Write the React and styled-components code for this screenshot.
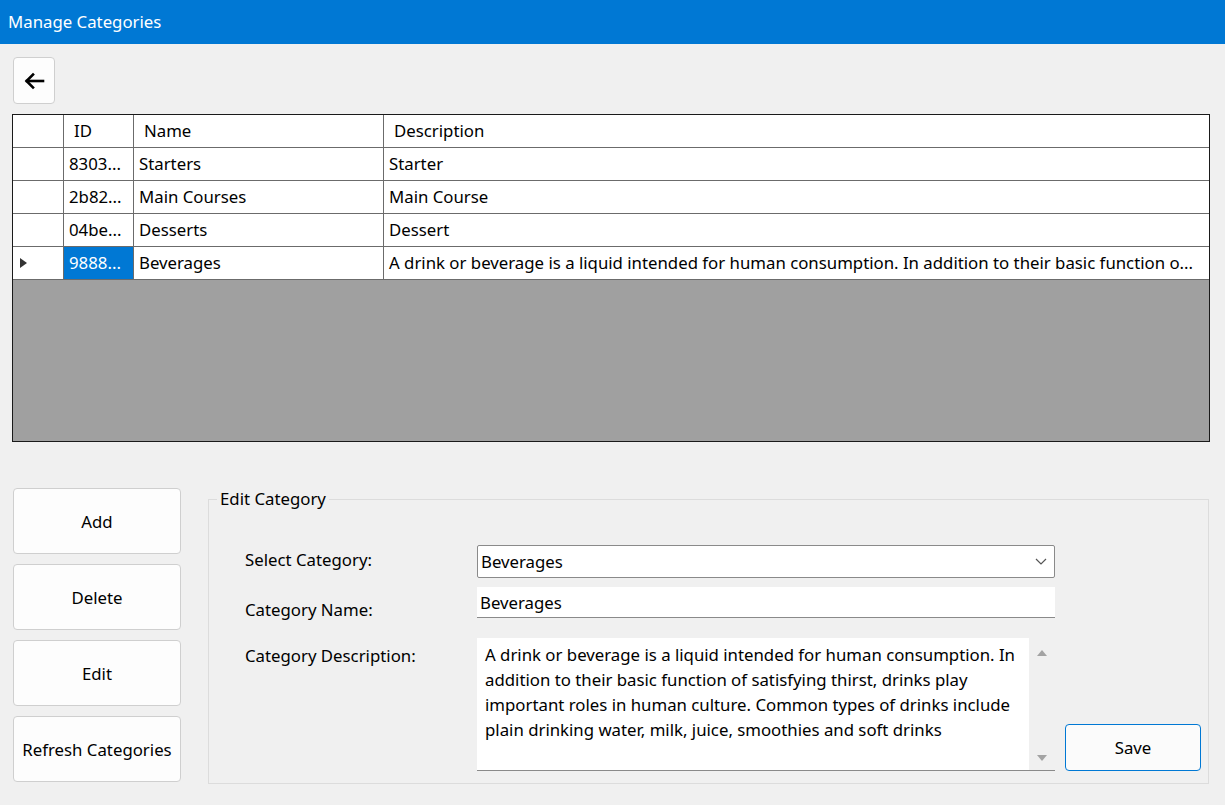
import React from "react";
import styled, { createGlobalStyle } from "styled-components";

const FS = "16.8px";

const Global = createGlobalStyle`
  html, body { margin: 0; padding: 0; background: #f0f0f0; }
  body { font-family: "Noto Sans", "Open Sans", sans-serif; color: #000; }
  * { box-sizing: border-box; }
`;

const Window = styled.div`
  width: 1225px;
  height: 805px;
  background: #f0f0f0;
  display: flex;
  flex-direction: column;
  overflow: hidden;
`;

const TitleBar = styled.div`
  height: 44px;
  background: #0078d4;
  color: #fff;
  display: flex;
  align-items: center;
  padding-left: 8px;
  font-size: ${FS};
  padding-bottom: 1px;
`;

const Body = styled.div`
  display: flex;
  flex-direction: column;
  padding: 13px 15px 0 12px;
`;

const IconButton = styled.button`
  width: 42px;
  height: 47px;
  margin-left: 1px;
  background: #fdfdfd;
  border: 1px solid #cfcfcf;
  border-radius: 4px;
  display: flex;
  align-items: center;
  justify-content: center;
  padding: 0;
`;

const Grid = styled.div`
  margin-top: 10px;
  height: 328px;
  border: 1px solid #1a1a1a;
  background: #a0a0a0;
  display: flex;
  flex-direction: column;
`;

const Row = styled.div`
  display: grid;
  grid-template-columns: 51px 70px 250px 1fr;
  height: 33px;
  background: #fff;
  border-bottom: 1px solid #6b6b6b;
`;

const Cell = styled.div`
  display: flex;
  align-items: center;
  padding-left: ${(p) => (p.$header ? "10px" : "5px")};
  padding-right: 4px;
  border-right: ${(p) => (p.$last ? "none" : "1px solid #6b6b6b")};
  background: ${(p) => (p.$selected ? "#0078d4" : "#fff")};
  color: ${(p) => (p.$selected ? "#fff" : "#000")};
  font-size: ${FS};
  white-space: nowrap;
  overflow: hidden;
  padding-bottom: 1px;
`;

const RowMarker = styled.span`
  width: 0;
  height: 0;
  margin-left: 2px;
  border-top: 5.5px solid transparent;
  border-bottom: 5.5px solid transparent;
  border-left: 7px solid #333;
`;

const Bottom = styled.div`
  margin-top: 46px;
  display: flex;
  align-items: flex-start;
  gap: 27px;
`;

const ButtonColumn = styled.div`
  display: flex;
  flex-direction: column;
  gap: 10px;
  margin-left: 1px;
`;

const ActionButton = styled.button`
  width: 168px;
  height: 66px;
  background: #fdfdfd;
  border: 1px solid #cfcfcf;
  border-radius: 4px;
  font-family: inherit;
  font-size: ${FS};
  color: #000;
  padding: 0;
`;

const GroupBox = styled.fieldset`
  margin: 0;
  width: 1001px;
  height: 296px;
  border: 1px solid #dcdcdc;
  padding: 0 7px 12px 8px;
  display: flex;
  flex-direction: column;
  justify-content: flex-end;
`;

const Legend = styled.legend`
  font-size: ${FS};
  padding: 0 3px;
  margin-left: 0;
  line-height: 22px;
`;

const Form = styled.div`
  margin-left: 28px;
  display: grid;
  grid-template-columns: 222px 578px 136px;
  grid-template-rows: 33px 31px 144px;
  column-gap: 10px;
  row-gap: 9px;
`;

const Label = styled.div`
  font-size: ${FS};
  align-self: ${(p) => p.$align || "center"};
  padding-top: ${(p) => p.$pt || "0"};
  padding-bottom: ${(p) => p.$pb || "0"};
  margin-top: ${(p) => p.$mt || "0"};
`;

const Combo = styled.div`
  background: #fff;
  border: 1px solid #8a8a8a;
  border-radius: 2px;
  display: flex;
  align-items: center;
  justify-content: space-between;
  padding: 0 7px 1px 3px;
  font-size: ${FS};
`;

const TextBox = styled.div`
  background: #fff;
  border-bottom: 1px solid #8a8a8a;
  display: flex;
  align-items: center;
  padding-left: 3px;
  font-size: ${FS};
`;

const MultiLine = styled.div`
  margin-top: 11px;
  background: #fff;
  border-bottom: 1px solid #8a8a8a;
  display: flex;
  justify-content: space-between;
`;

const MultiText = styled.div`
  padding: 4px 0 0 8px;
  font-size: ${FS};
  line-height: 25px;
  white-space: nowrap;
  overflow: hidden;
`;

const ScrollBar = styled.div`
  width: 26px;
  flex: none;
  background: #f0f0f0;
  display: flex;
  flex-direction: column;
  justify-content: space-between;
  align-items: center;
  padding: 12px 0 9px;
`;

const Tri = styled.span`
  width: 0;
  height: 0;
  border-left: 5px solid transparent;
  border-right: 5px solid transparent;
  ${(p) => (p.$up ? "border-bottom: 6px solid #a3a3a3;" : "border-top: 6px solid #a3a3a3;")}
`;

const SaveButton = styled.button`
  align-self: end;
  height: 47px;
  background: #fbfbfb;
  border: 1px solid #0078d4;
  border-radius: 4px;
  font-family: inherit;
  font-size: ${FS};
  color: #000;
  padding: 0;
`;

const rows = [
  { id: "8303...", name: "Starters", desc: "Starter" },
  { id: "2b82...", name: "Main Courses", desc: "Main Course" },
  { id: "04be...", name: "Desserts", desc: "Dessert" },
  {
    id: "9888...",
    name: "Beverages",
    desc: "A drink or beverage is a liquid intended for human consumption. In addition to their basic function o...",
    current: true,
  },
];

export default function App() {
  return (
    <Window>
      <Global />
      <TitleBar>Manage Categories</TitleBar>
      <Body>
        <IconButton aria-label="Back">
          <svg width="22" height="20" viewBox="0 0 22 20" fill="none" stroke="#000" strokeWidth="2.6" strokeLinecap="square">
            <path d="M20 10H4" />
            <path d="M10 3.5L3.5 10l6.5 6.5" />
          </svg>
        </IconButton>
        <Grid>
          <Row>
            <Cell $header />
            <Cell $header>ID</Cell>
            <Cell $header>Name</Cell>
            <Cell $header $last>Description</Cell>
          </Row>
          {rows.map((r) => (
            <Row key={r.id}>
              <Cell>{r.current && <RowMarker />}</Cell>
              <Cell $selected={r.current}>{r.id}</Cell>
              <Cell>{r.name}</Cell>
              <Cell $last>{r.desc}</Cell>
            </Row>
          ))}
        </Grid>
        <Bottom>
          <ButtonColumn>
            <ActionButton>Add</ActionButton>
            <ActionButton>Delete</ActionButton>
            <ActionButton>Edit</ActionButton>
            <ActionButton>Refresh Categories</ActionButton>
          </ButtonColumn>
          <GroupBox>
            <Legend>Edit Category</Legend>
            <Form>
              <Label $pb="4px">Select Category:</Label>
              <Combo>
                <span>Beverages</span>
                <svg width="12" height="7" viewBox="0 0 12 7" fill="none" stroke="#555" strokeWidth="1.2">
                  <path d="M1 1l5 5 5-5" />
                </svg>
              </Combo>
              <div />
              <Label $pt="14px">Category Name:</Label>
              <TextBox>Beverages</TextBox>
              <div />
              <Label $align="start" $pt="6px" $mt="11px">Category Description:</Label>
              <MultiLine>
                <MultiText>
                  A drink or beverage is a liquid intended for human consumption. In
                  <br />
                  addition to their basic function of satisfying thirst, drinks play
                  <br />
                  important roles in human culture. Common types of drinks include
                  <br />
                  plain drinking water, milk, juice, smoothies and soft drinks
                </MultiText>
                <ScrollBar>
                  <Tri $up />
                  <Tri />
                </ScrollBar>
              </MultiLine>
              <SaveButton>Save</SaveButton>
            </Form>
          </GroupBox>
        </Bottom>
      </Body>
    </Window>
  );
}
